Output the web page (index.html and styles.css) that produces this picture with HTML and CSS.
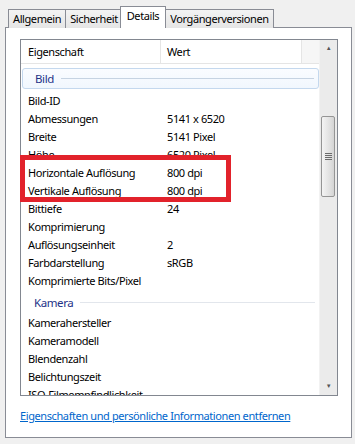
FILE: index.html
```html
<!DOCTYPE html>
<html lang="de">
<head>
    <meta charset="UTF-8">
    <title>Eigenschaften - Details</title>
    <link rel="stylesheet" href="styles.css">
</head>
<body>
    <div class="dialog">
        <div class="tabs">
            <div class="tab">Allgemein</div>
            <div class="tab">Sicherheit</div>
            <div class="tab tab-active">Details</div>
            <div class="tab">Vorgängerversionen</div>
        </div>
        <div class="panel">
            <div class="list">
                <div class="list-main">
                    <div class="list-header">
                        <div class="col col-name">Eigenschaft</div>
                        <div class="col col-value">Wert</div>
                        <div class="col col-fill"></div>
                    </div>
                    <div class="list-body">
                        <div class="group group-hover"><span>Bild</span><i></i></div>
                        <div class="row"><span>Bild-ID</span><span></span></div>
                        <div class="row"><span>Abmessungen</span><span>5141 x 6520</span></div>
                        <div class="row"><span>Breite</span><span>5141 Pixel</span></div>
                        <div class="row"><span>Höhe</span><span>6520 Pixel</span></div>
                        <div class="row"><span>Horizontale Auflösung</span><span>800 dpi</span></div>
                        <div class="row"><span>Vertikale Auflösung</span><span>800 dpi</span></div>
                        <div class="row"><span>Bittiefe</span><span>24</span></div>
                        <div class="row"><span>Komprimierung</span><span></span></div>
                        <div class="row"><span>Auflösungseinheit</span><span>2</span></div>
                        <div class="row"><span>Farbdarstellung</span><span>sRGB</span></div>
                        <div class="row"><span>Komprimierte Bits/Pixel</span><span></span></div>
                        <div class="group"><span>Kamera</span><i></i></div>
                        <div class="row"><span>Kamerahersteller</span><span></span></div>
                        <div class="row"><span>Kameramodell</span><span></span></div>
                        <div class="row"><span>Blendenzahl</span><span></span></div>
                        <div class="row"><span>Belichtungszeit</span><span></span></div>
                        <div class="row"><span>ISO-Filmempfindlichkeit</span><span></span></div>
                    </div>
                </div>
                <div class="scrollbar">
                    <div class="scroll-arrow">&#9650;</div>
                    <div class="scroll-track">
                        <div class="scroll-thumb"><b></b><b></b><b></b><b></b></div>
                    </div>
                    <div class="scroll-arrow">&#9660;</div>
                </div>
            </div>
            <a class="link" href="#">Eigenschaften und persönliche Informationen entfernen</a>
        </div>
        <!-- red marker drawn over the list -->
        <div class="marker"></div>
    </div>
</body>
</html>
```

FILE: styles.css
```css
body {
    margin: 0;
    background: #f0f0f0;
    font-family: "Noto Sans", "Open Sans", sans-serif;
    font-size: 11px;
    letter-spacing: -0.4px;
    color: #000;
}

.dialog {
    position: relative;
    padding: 7px 3px 0 5px;
}

.tabs {
    display: flex;
    align-items: flex-end;
    height: 21px;
    padding-left: 3px;
}

.tab {
    height: 18px;
    line-height: 17px;
    padding: 0 4px;
    border: 1px solid #898c95;
    border-bottom: none;
    margin-right: -1px;
    background: linear-gradient(#f3f3f3, #e5e5e5);
    color: #000;
}

.tab-active {
    position: relative;
    z-index: 1;
    height: 21px;
    line-height: 18px;
    padding: 0 6px;
    background: #fff;
    margin: 0 -1px 0 -2px;
}

.panel {
    box-sizing: border-box;
    height: 411px;
    margin-top: -1px;
    border: 1px solid #898c95;
    background: #fff;
    padding: 11px 0 0 14px;
}

.list {
    box-sizing: border-box;
    display: flex;
    width: 318px;
    height: 357px;
    border: 1px solid #828790;
}

.list-main {
    flex: 1;
    overflow: hidden;
}

.list-header {
    display: flex;
    height: 23px;
    border-bottom: 1px solid #e5e5e5;
}

.col {
    box-sizing: border-box;
    line-height: 23px;
    border-right: 1px solid #e5e5e5;
}

.col-name {
    width: 140px;
    padding-left: 7px;
}

.col-value {
    width: 141px;
    padding-left: 6px;
}

.col-fill {
    flex: 1;
    border-right: none;
    background: #f6f6f6;
}

.list-body {
    height: 332px;
    overflow: hidden;
}

.row {
    display: flex;
    height: 18px;
    line-height: 18px;
}

.row span:first-child {
    width: 140px;
    padding-left: 7px;
    box-sizing: border-box;
    white-space: nowrap;
}

.row span:last-child {
    padding-left: 6px;
}

.group {
    display: flex;
    align-items: center;
    height: 24px;
    margin: 0 0 0 1px;
    padding: 0 4px 0 12px;
    color: #1e3287;
    font-size: 11.5px;
}

.group i {
    flex: 1;
    height: 1px;
    margin-left: 7px;
    background: #e2e6ec;
}

.group-hover {
    height: 19px;
    margin: 4px 0 3px 1px;
    border: 1px solid #c4d8ee;
    border-radius: 3px;
    background: linear-gradient(#fafcff, #f1f7fe);
}

.group-hover i {
    background: #c6d3e2;
}

.scrollbar {
    display: flex;
    flex-direction: column;
    width: 17px;
    background: #ebebeb;
    border-left: 1px solid #f2f2f2;
}

.scroll-arrow {
    height: 17px;
    line-height: 17px;
    text-align: center;
    font-size: 6px;
    color: #555;
}

.scroll-track {
    flex: 1;
    padding-top: 59px;
}

.scroll-thumb {
    box-sizing: border-box;
    display: flex;
    flex-direction: column;
    justify-content: center;
    align-items: center;
    gap: 1px;
    width: 14px;
    height: 81px;
    margin-left: 1px;
    border: 1px solid #959595;
    border-radius: 2px;
    background: linear-gradient(90deg, #f4f4f4, #e2e2e2 60%, #d4d4d4);
}

.scroll-thumb b {
    width: 7px;
    height: 1px;
    background: #6b6b6b;
}

.link {
    display: block;
    margin-top: 12px;
    color: #0066cc;
}

.marker {
    position: absolute;
    left: 20px;
    top: 155px;
    box-sizing: border-box;
    width: 211px;
    height: 47px;
    border: 5px solid #e2222b;
}
```
